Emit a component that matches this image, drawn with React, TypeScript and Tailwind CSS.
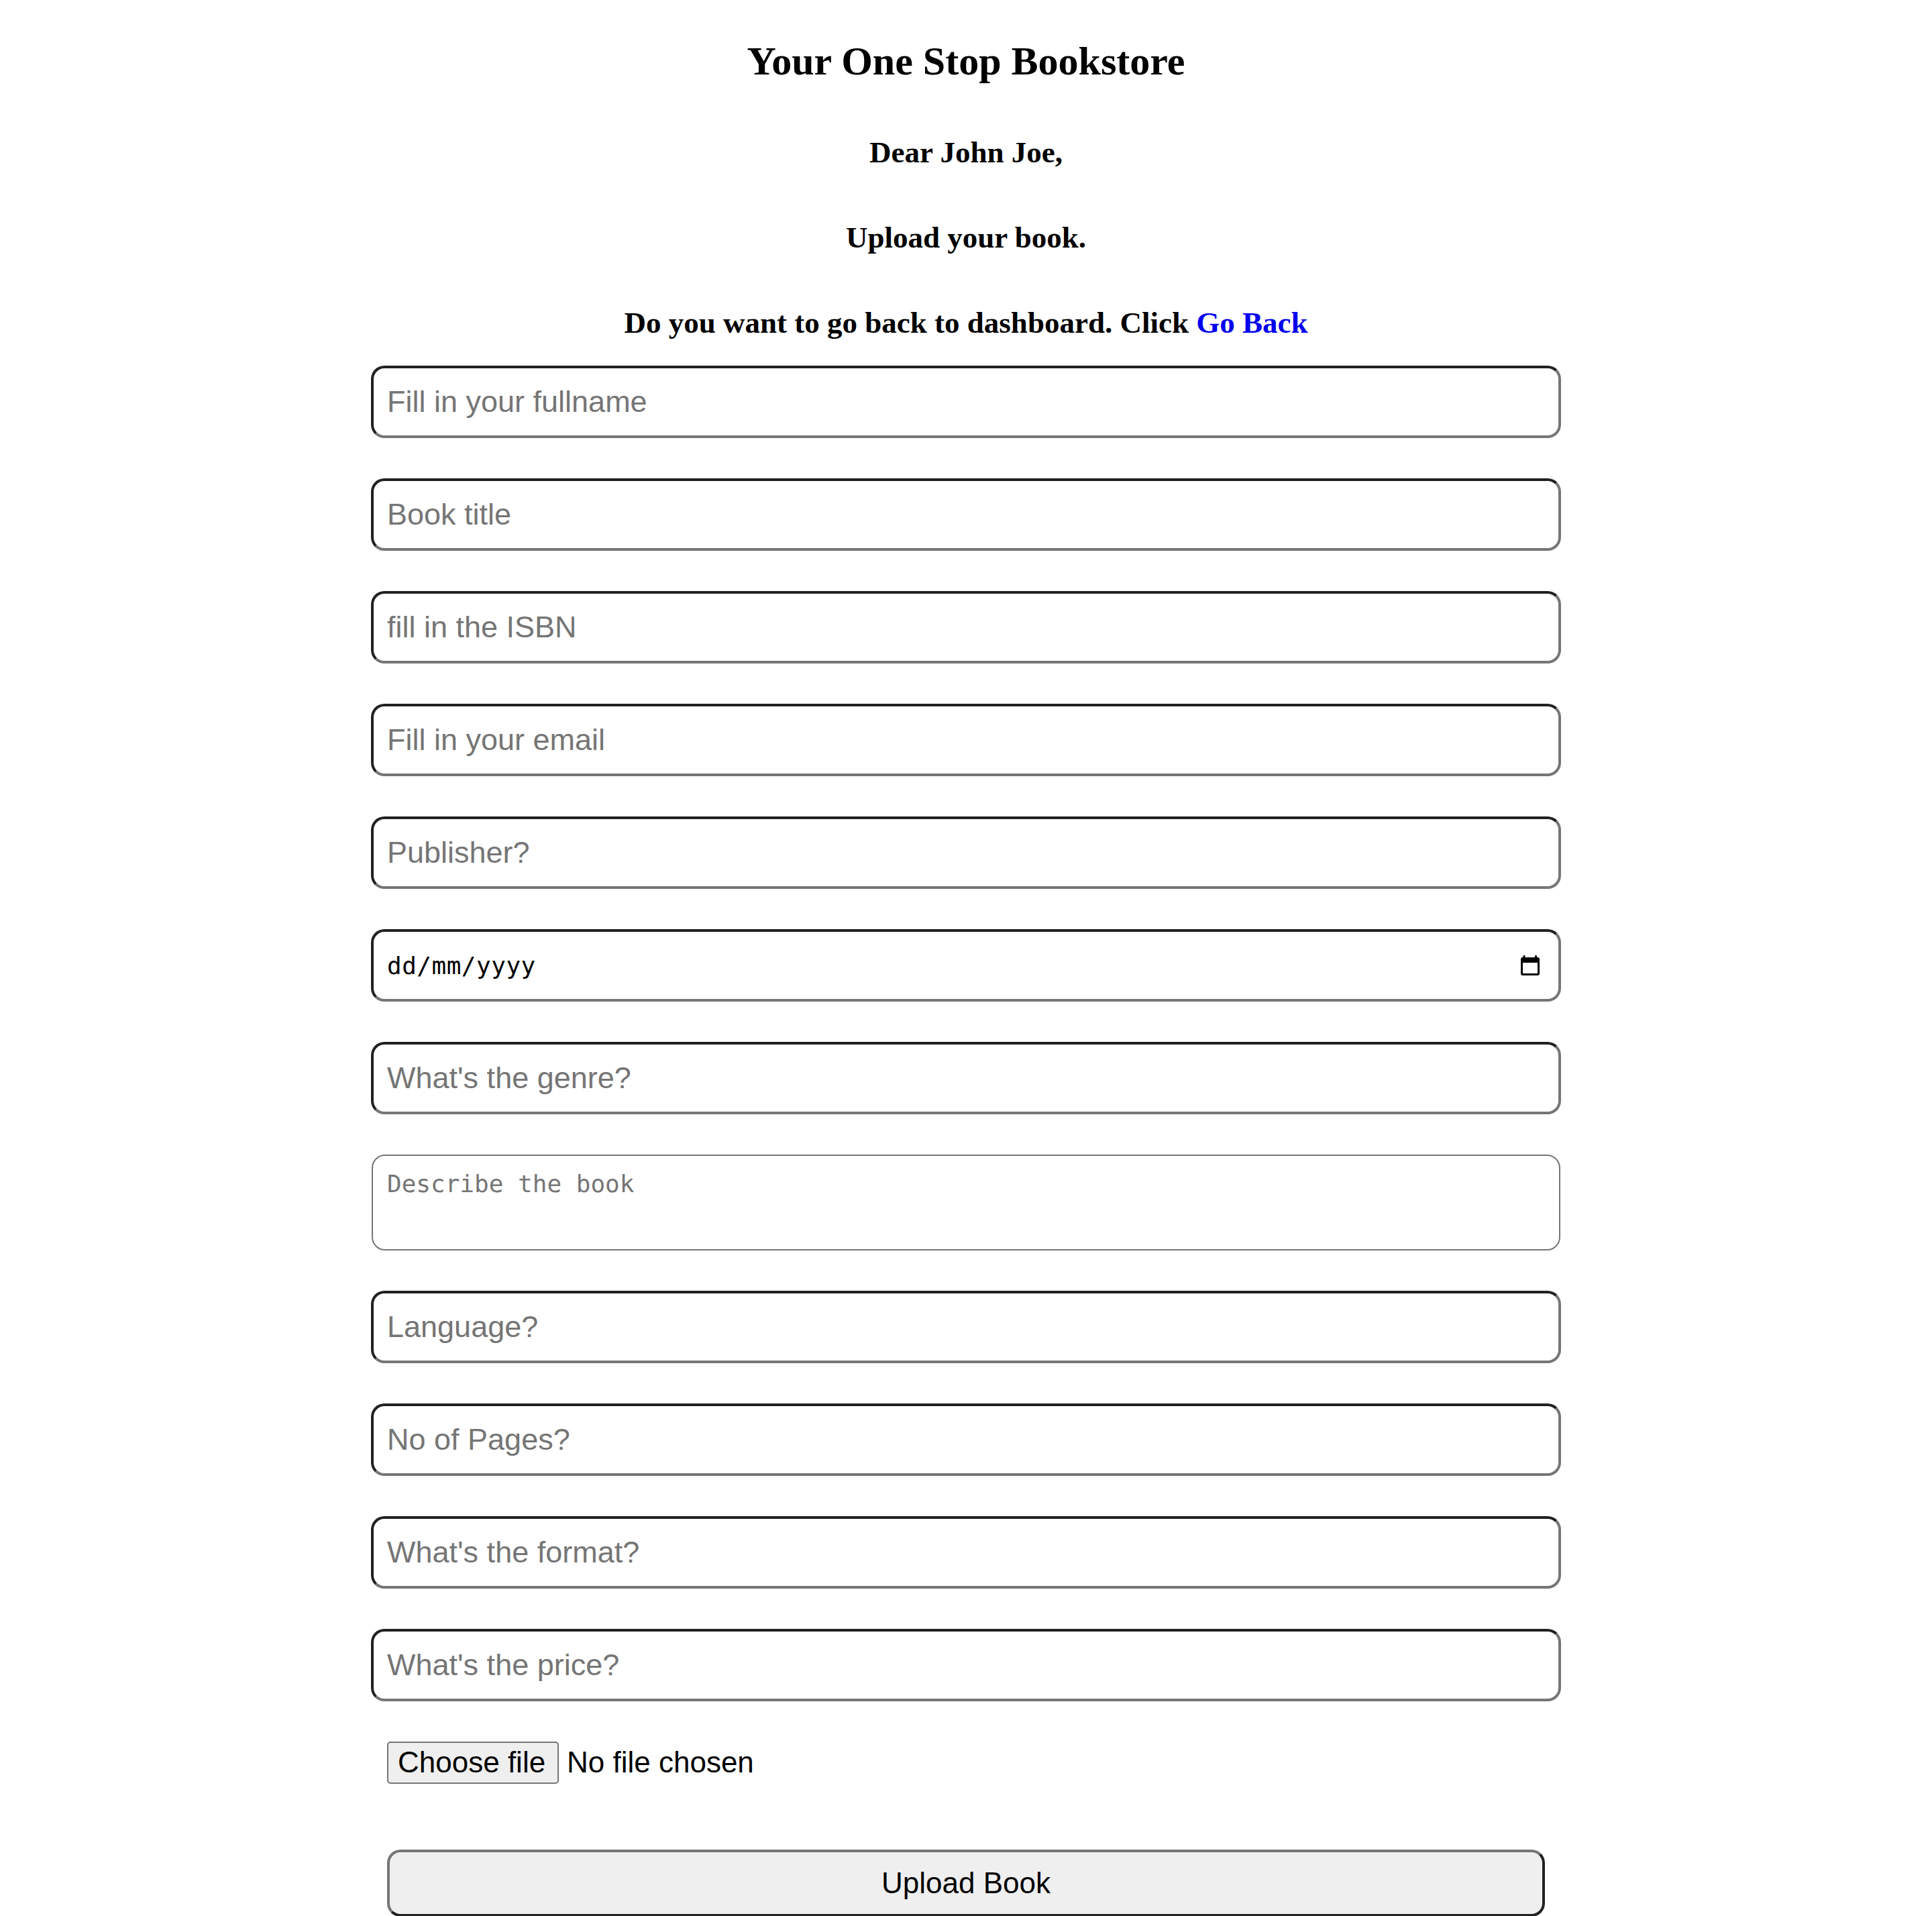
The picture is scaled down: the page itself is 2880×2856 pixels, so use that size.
import React from 'react';

const fields = [
  'Fill in your fullname',
  'Book title',
  'fill in the ISBN',
  'Fill in your email',
  'Publisher?',
];

const fieldsAfter = ['Language?', 'No of Pages?', "What's the format?", "What's the price?"];

const inputCls =
  "block w-full h-[108px] rounded-[20px] border-4 border-t-[#212121] border-l-[#212121] border-b-[#767676] border-r-[#767676] bg-white px-[20px] font-['Liberation_Sans',Arial,sans-serif] text-[45px] text-black placeholder:text-[#757575] outline-none";

function CalendarIcon() {
  return (
    <svg width="28" height="30" viewBox="0 0 28 30" aria-hidden="true">
      <rect x="3.5" y="0" width="3" height="5" rx="1" fill="#000" />
      <rect x="21" y="0" width="3" height="5" rx="1" fill="#000" />
      <path
        d="M3 3h22a3 3 0 0 1 3 3v21a3 3 0 0 1-3 3H3a3 3 0 0 1-3-3V6a3 3 0 0 1 3-3z M3 11v16h22V11z"
        fill="#000"
        fillRule="evenodd"
      />
    </svg>
  );
}

export default function App() {
  return (
    <div className="min-h-screen bg-white text-black">
      <div className="flex flex-col items-center font-['Liberation_Serif','Times_New_Roman',serif] font-bold">
        <h1 className="mt-[61px] text-[60px] leading-none">Your One Stop Bookstore</h1>
        <p className="mt-[84px] text-[45px] leading-none">Dear John Joe,</p>
        <p className="mt-[82px] text-[45px] leading-none">Upload your book.</p>
        <p className="mt-[82px] text-[45px] leading-none">
          Do you want to go back to dashboard. Click{' '}
          <a href="#" className="text-[#0000ee]">
            Go Back
          </a>
        </p>
      </div>

      <form className="mx-auto mt-[41px] flex w-[1774px] flex-col" onSubmit={(e) => e.preventDefault()}>
        <div className="flex flex-col gap-[60px]">
          {fields.map((f) => (
            <input key={f} type="text" placeholder={f} className={inputCls} />
          ))}

          {/* date field */}
          <div className="flex h-[108px] w-full items-center justify-between rounded-[20px] border-4 border-t-[#212121] border-l-[#212121] border-b-[#767676] border-r-[#767676] bg-white pl-[20px] pr-[28px]">
            <span className="pt-[2px] font-['DejaVu_Sans_Mono',monospace] text-[36px] tracking-[0.5px] text-black">
              dd/mm/yyyy
            </span>
            <CalendarIcon />
          </div>

          <input type="text" placeholder="What's the genre?" className={inputCls} />

          <textarea
            placeholder="Describe the book"
            className="mx-[1px] block h-[143px] resize-none rounded-[20px] border-2 border-[#767676] bg-white px-[21px] pt-[15px] font-['DejaVu_Sans_Mono',monospace] text-[36px] text-black placeholder:text-[#757575] outline-none"
          />
        </div>

        <div className="mt-[60px] flex flex-col gap-[60px]">
          {fieldsAfter.map((f) => (
            <input key={f} type="text" placeholder={f} className={inputCls} />
          ))}
        </div>

        {/* file picker */}
        <div className="mt-[58px] flex items-center pl-[24px] font-['Liberation_Sans',Arial,sans-serif] text-[44px] text-black">
          <button
            type="button"
            className="flex h-[63px] w-[256px] items-center rounded-[5px] border-2 border-[#767676] bg-[#efefef] pl-[14px] leading-none"
          >
            Choose file
          </button>
          <span className="ml-[12px]">No file chosen</span>
        </div>

        <button
          type="submit"
          className="mx-[24px] mt-[97px] h-[100px] rounded-[20px] border-4 border-t-[#767676] border-l-[#767676] border-b-[#212121] border-r-[#212121] bg-[#efefef] font-['Liberation_Sans',Arial,sans-serif] text-[44px] text-black"
        >
          Upload Book
        </button>
      </form>
    </div>
  );
}
